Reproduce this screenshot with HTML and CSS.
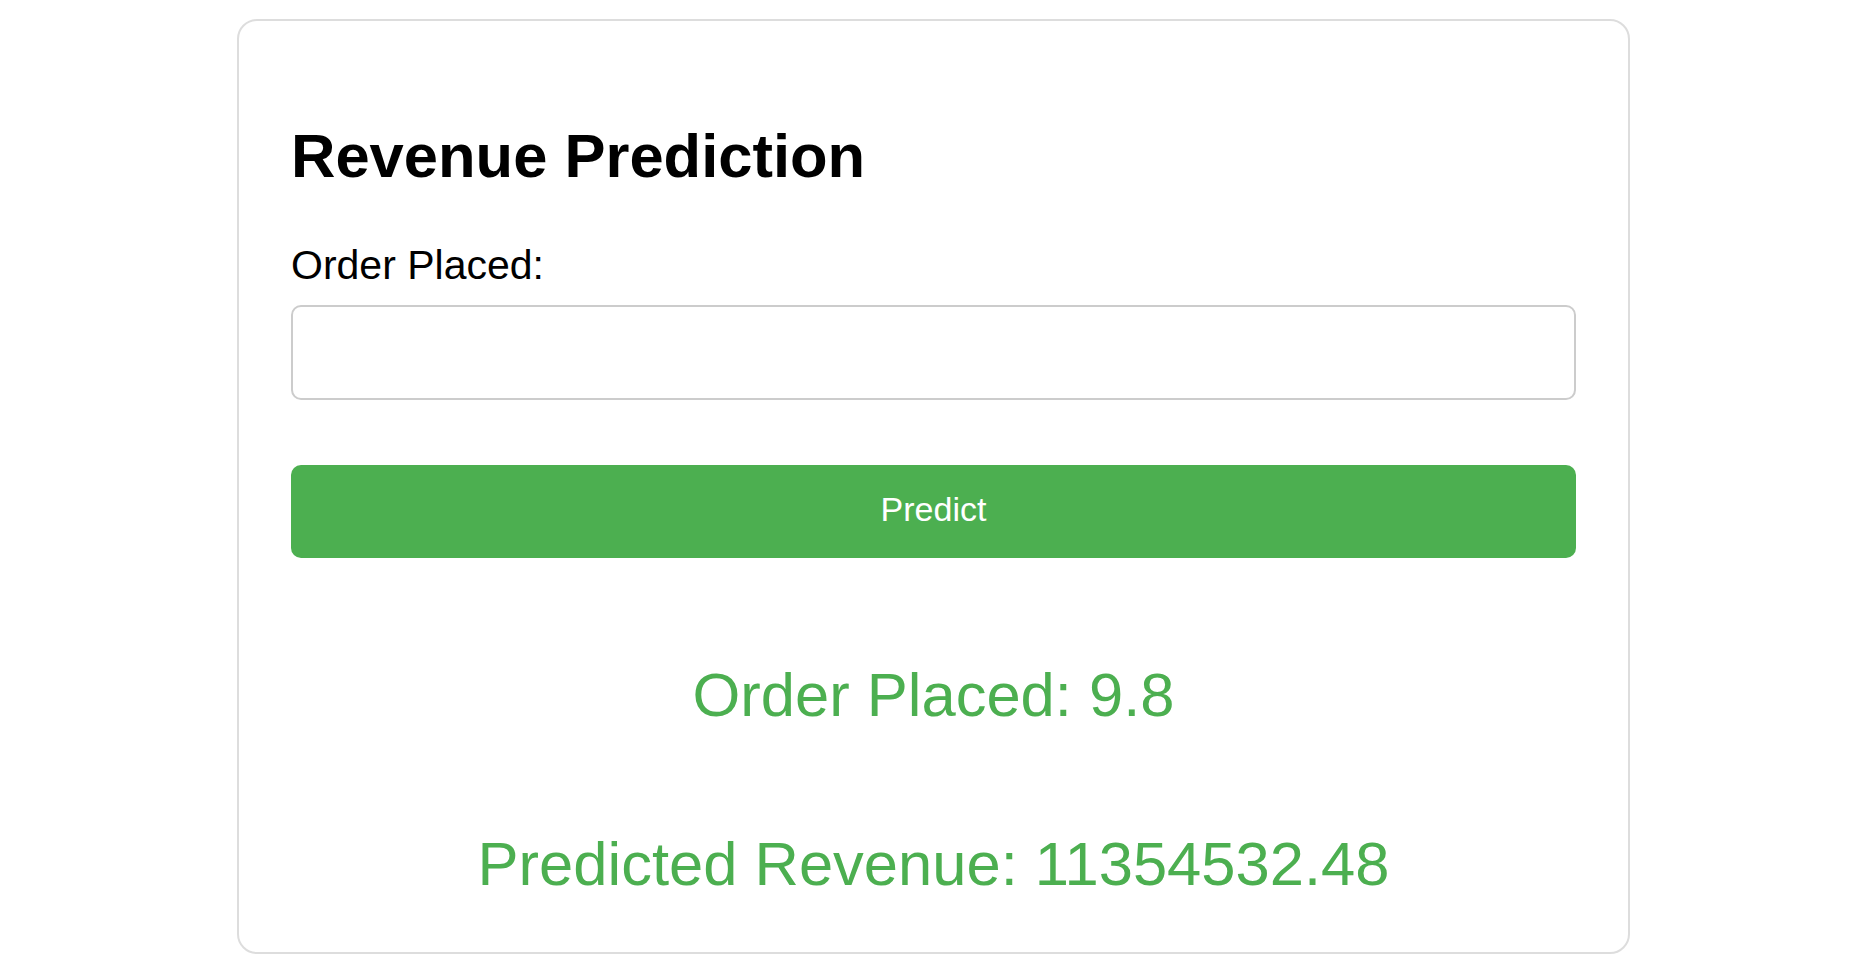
FILE: index.html
```html
<!DOCTYPE html>
<html lang="en">
<head>
<meta charset="utf-8">
<title>Revenue Prediction</title>
<link rel="stylesheet" href="styles.css">
</head>
<body>
  <div class="card">
    <h1 class="title">Revenue Prediction</h1>
    <form class="form">
      <label class="label" for="order">Order Placed:</label>
      <input class="input" id="order" type="text">
      <button class="btn" type="button">Predict</button>
    </form>
    <div class="results">
      <p class="result result-first">Order Placed: 9.8</p>
      <p class="result result-second">Predicted Revenue: 11354532.48</p>
    </div>
  </div>
</body>
</html>
```
FILE: styles.css
```css
html, body {
  background: #ffffff;
}
body {
  margin: 0;
  padding: 19px 0 0 10px;
  font-family: "Liberation Sans", Arial, sans-serif;
  color: #000;
}
.card {
  box-sizing: content-box;
  width: 1285px;
  margin: 0 auto;
  padding: 52px 52px 53px;
  border: 2px solid #dddddd;
  border-radius: 20px;
  background: #fff;
}
.title {
  margin: 47px 0 0;
  font-size: 61.5px;
  line-height: 71px;
  font-weight: bold;
}
.form {
  display: flex;
  flex-direction: column;
  margin: 0;
}
.label {
  display: block;
  margin-top: 51px;
  font-size: 41px;
  line-height: 47px;
}
.input {
  box-sizing: border-box;
  width: 100%;
  height: 95px;
  margin: 16px 0 0;
  padding: 0 20px;
  border: 2px solid #cccccc;
  border-radius: 10px;
  font-size: 34px;
  font-family: inherit;
  background: #fff;
  outline: none;
}
.btn {
  box-sizing: border-box;
  width: 100%;
  height: 93px;
  margin-top: 65px;
  padding: 0 0 5px;
  border: none;
  border-radius: 10px;
  background: #4caf50;
  color: #ffffff;
  font-family: inherit;
  font-size: 34px;
  cursor: pointer;
}
.results {
  display: flex;
  flex-direction: column;
}
.result {
  margin: 0;
  text-align: center;
  color: #4caf50;
  font-size: 61.5px;
  line-height: 71px;
}
.result-first {
  margin-top: 101px;
}
.result-second {
  margin-top: 98px;
}
```
